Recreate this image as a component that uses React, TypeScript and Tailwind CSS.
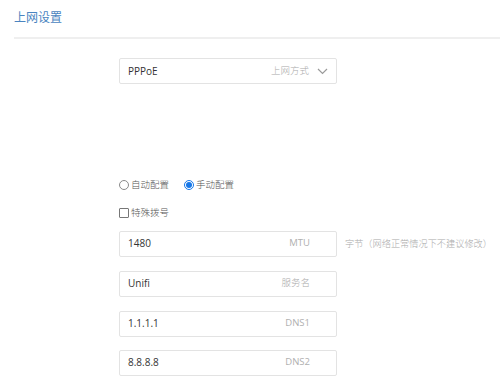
import React from 'react';

const font = { fontFamily: '"Open Sans", "Noto Sans CJK SC", sans-serif' };

const Field = ({ value, label, chevron, latin }: { value: string; label: string; chevron?: boolean; latin?: boolean }) => (
  <div className="flex h-[26px] w-[218px] items-center rounded-[2px] border border-[#e3e3e3] bg-white pl-[8px] pr-[26px]">
    <span className="flex-1 text-[10px] text-[#333]">{value}</span>
    <span className={`text-[9.5px] ${latin ? 'text-[#b0b0b0]' : 'font-light text-[#aaa]'}`}>{label}</span>
    {chevron && (
      <svg className="-mr-[18px] ml-[8px]" width="11" height="7" viewBox="0 0 11 7" fill="none">
        <path d="M1 1l4.5 4.5L10 1" stroke="#9a9a9a" strokeWidth="1.2" />
      </svg>
    )}
  </div>
);

const Radio = ({ checked, label }: { checked?: boolean; label: string }) => (
  <div className="flex items-center gap-[2px]">
    <span
      className={`flex h-[10px] w-[10px] items-center justify-center rounded-full border bg-white ${
        checked ? 'border-[#1677e8]' : 'border-[#8a8a8a]'
      }`}
    >
      {checked && <span className="h-[6px] w-[6px] rounded-full bg-[#1677e8]" />}
    </span>
    <span className="text-[9.5px] font-light text-[#555]">{label}</span>
  </div>
);

const App = () => {
  return (
    <div className="h-[387px] w-[500px] overflow-hidden bg-white" style={font}>
      <div className="pl-[14px] pt-[10px]">
        <h2 className="text-[12px] leading-[16px] text-[#4a84c0]">上网设置</h2>
        <div className="mt-[11px] h-[2px] bg-[#efefef]" />
      </div>

      <div className="ml-[119px] mt-[19px]">
        <Field value="PPPoE" label="上网方式" chevron />

        <div className="mt-[94px] flex items-center gap-[15px]">
          <Radio label="自动配置" />
          <Radio checked label="手动配置" />
        </div>

        <div className="mt-[14px] flex items-center gap-[2px]">
          <span className="h-[10px] w-[10px] rounded-[1px] border border-[#777] bg-white" />
          <span className="text-[9.5px] font-light text-[#555]">特殊拨号</span>
        </div>

        <div className="mt-[10px] flex items-center gap-[8px]">
          <Field value="1480" label="MTU" latin />
          <span className="text-[9.2px] font-light text-[#aaa]">字节（网络正常情况下不建议修改）</span>
        </div>
        <div className="mt-[14px]">
          <Field value="Unifi" label="服务名" />
        </div>
        <div className="mt-[14px]">
          <Field value="1.1.1.1" label="DNS1" latin />
        </div>
        <div className="mt-[13px]">
          <Field value="8.8.8.8" label="DNS2" latin />
        </div>
      </div>
    </div>
  );
};

export default App;
